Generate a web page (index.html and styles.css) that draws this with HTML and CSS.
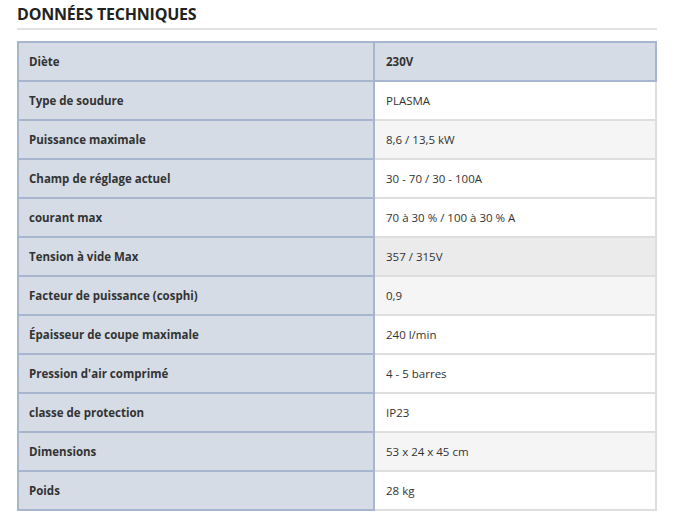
FILE: index.html
```html
<!DOCTYPE html>
<html lang="fr">
<head>
<meta charset="utf-8">
<title>Données techniques</title>
<link rel="stylesheet" href="styles.css">
</head>
<body>
<section class="specs">
  <h2 class="specs-title">DONNÉES TECHNIQUES</h2>
  <table class="specs-table">
    <tbody>
      <tr class="head-row"><th>Diète</th><th class="head-val">230V</th></tr>
      <tr><th>Type de soudure</th><td>PLASMA</td></tr>
      <tr class="alt"><th>Puissance maximale</th><td>8,6 / 13,5 kW</td></tr>
      <tr><th>Champ de réglage actuel</th><td>30 - 70 / 30 - 100A</td></tr>
      <tr><th>courant max</th><td>70 à 30 % / 100 à 30 % A</td></tr>
      <tr class="hover"><th>Tension à vide Max</th><td>357 / 315V</td></tr>
      <tr class="alt"><th>Facteur de puissance (cosphi)</th><td>0,9</td></tr>
      <tr><th>Épaisseur de coupe maximale</th><td>240 l/min</td></tr>
      <tr><th>Pression d'air comprimé</th><td>4 - 5 barres</td></tr>
      <tr><th>classe de protection</th><td>IP23</td></tr>
      <tr class="alt"><th>Dimensions</th><td>53 x 24 x 45 cm</td></tr>
      <tr><th>Poids</th><td>28 kg</td></tr>
    </tbody>
  </table>
</section>
</body>
</html>
```

FILE: styles.css
```css
html, body {
  margin: 0;
  padding: 0;
  background: #ffffff;
}
body {
  font-family: "Open Sans", "Liberation Sans", sans-serif;
  color: #333333;
}
.specs {
  width: 640px;
  margin: 0 0 0 17px;
  padding-top: 3px;
}
.specs-title {
  margin: 0;
  font-size: 16px;
  font-weight: 700;
  line-height: 23px;
  color: #222222;
  padding-bottom: 2px;
  border-bottom: 2px solid #e2e2e2;
  letter-spacing: -0.2px;
}
.specs-table {
  margin-top: 11px;
  width: 640px;
  border-collapse: collapse;
  font-size: 11.5px;
  line-height: 17px;
}
.specs-table th,
.specs-table td {
  padding: 10px 10px;
  text-align: left;
  vertical-align: middle;
}
.specs-table th {
  width: 334px;
  font-weight: 700;
  color: #333333;
  background: #d5dce5;
  border: 2px solid #a8b5ce;
}
.specs-table td {
  padding-left: 11px;
  font-weight: 400;
  color: #333333;
  background: #ffffff;
  border: 2px solid #dedede;
}
.specs-table .head-val {
  width: auto;
  padding-left: 11px;
}
.specs-table tr.alt td {
  background: #f5f5f5;
}
.specs-table tr.hover td {
  background: #ebebeb;
}
```
